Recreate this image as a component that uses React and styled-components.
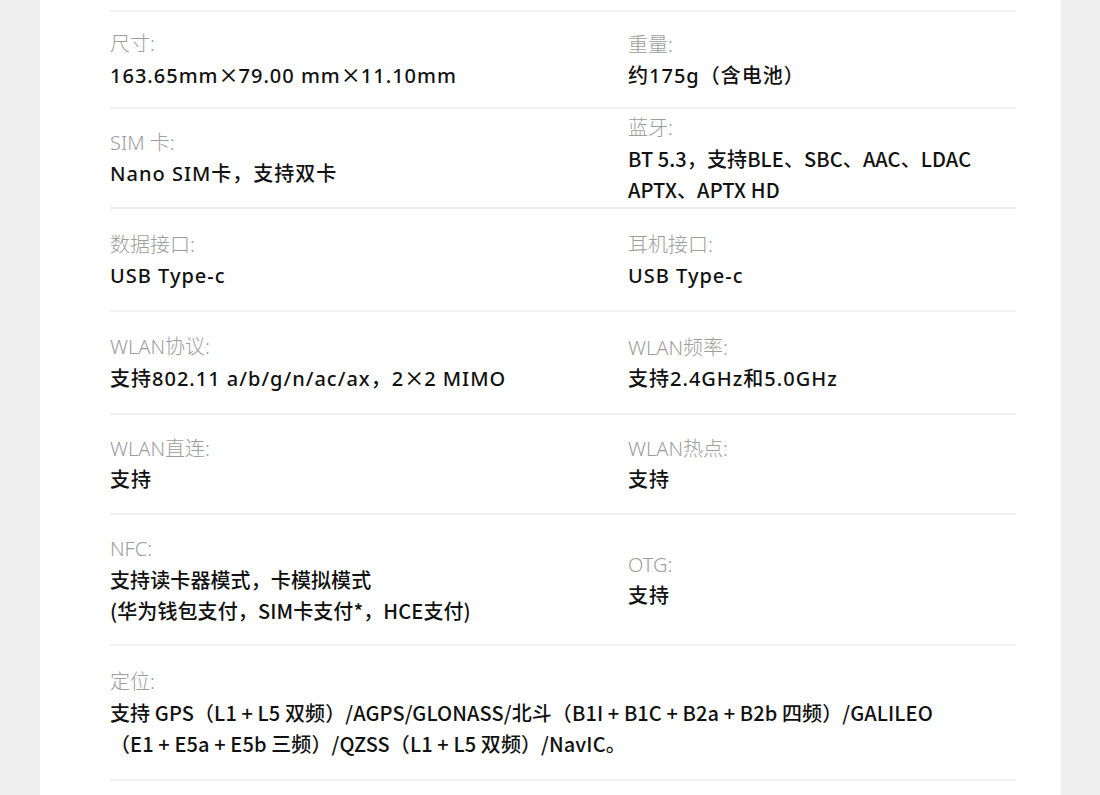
import React from 'react'
import styled, { createGlobalStyle } from 'styled-components'

const Global = createGlobalStyle`
body{
    margin: 0;
    background: #efefef;
    font-family: "Noto Sans", "Noto Sans CJK SC", sans-serif;
}
`

const specs = [
    {
        h: 95,
        cells: [
            { label: '尺寸:', lines: ['163.65mm×79.00 mm×11.10mm'] },
            { label: '重量:', lines: ['约175g（含电池）'] },
        ],
    },
    {
        h: 98,
        cells: [
            { label: 'SIM 卡:', lines: ['Nano SIM卡，支持双卡'] },
            { label: '蓝牙:', lines: ['BT 5.3，支持BLE、SBC、AAC、LDAC', 'APTX、APTX HD'], tight: true },
        ],
    },
    {
        h: 101,
        cells: [
            { label: '数据接口:', lines: ['USB Type-c'] },
            { label: '耳机接口:', lines: ['USB Type-c'] },
        ],
    },
    {
        h: 101,
        cells: [
            { label: 'WLAN协议:', lines: ['支持802.11 a/b/g/n/ac/ax，2×2 MIMO'] },
            { label: 'WLAN频率:', lines: ['支持2.4GHz和5.0GHz'] },
        ],
    },
    {
        h: 98,
        cells: [
            { label: 'WLAN直连:', lines: ['支持'] },
            { label: 'WLAN热点:', lines: ['支持'] },
        ],
    },
    {
        h: 129,
        cells: [
            { label: 'NFC:', lines: ['支持读卡器模式，卡模拟模式', '(华为钱包支付，SIM卡支付*，HCE支付)'], tight: true },
            { label: 'OTG:', lines: ['支持'] },
        ],
    },
    {
        h: 133,
        full: true,
        cells: [
            {
                label: '定位:',
                lines: [
                    '支持 GPS（L1 + L5 双频）/AGPS/GLONASS/北斗（B1I + B1C + B2a + B2b 四频）/GALILEO',
                    '（E1 + E5a + E5b 三频）/QZSS（L1 + L5 双频）/NavIC。',
                ],
                tight: true,
            },
        ],
    },
]

// the multiplication sign is drawn full width, as in the CJK font
function withTimes(text) {
    const parts = text.split('×')
    return parts.map((p, i) => (
        <React.Fragment key={i}>
            {p}
            {i < parts.length - 1 && <Times>×</Times>}
        </React.Fragment>
    ))
}

function App() {
    return (
        <>
            <Global />
            <Page>
                <Panel>
                    {specs.map((row, i) => (
                        <Row key={i} h={row.h} full={row.full}>
                            {row.cells.map((c, j) => (
                                <Cell key={j}>
                                    <Label>{c.label}</Label>
                                    {c.lines.map((l, k) => (
                                        <Value key={k} tight={c.tight}>{withTimes(l)}</Value>
                                    ))}
                                </Cell>
                            ))}
                        </Row>
                    ))}
                    <Divider />
                    <Spacer />
                </Panel>
            </Page>
        </>
    )
}

export default App

const Page = styled.div`
padding: 0 39px 0 40px;
`

const Panel = styled.div`
background: #fff;
padding: 10px 45px 0 70px;
`

const Row = styled.div`
display: grid;
grid-template-columns: ${props => props.full ? '1fr' : '518px 1fr'};
align-items: center;
min-height: ${props => props.h}px;
border-top: 2px solid #f1f1f1;
`

const Cell = styled.div`
display: flex;
flex-direction: column;
`

const Label = styled.div`
font-size: 20px;
line-height: 31px;
font-weight: 300;
color: #9d9d9d;
`

const Value = styled.div`
font-size: 20px;
line-height: 31px;
font-weight: 500;
color: #111;
white-space: nowrap;
letter-spacing: ${props => props.tight ? '0.1px' : '1px'};
font-family: ${props => props.tight ? '"Noto Sans CJK SC", sans-serif' : '"Noto Sans", "Noto Sans CJK SC", sans-serif'};
`

const Times = styled.span`
font-family: "Noto Sans CJK SC", sans-serif;
letter-spacing: 0;
`

const Divider = styled.div`
border-top: 2px solid #f1f1f1;
`

const Spacer = styled.div`
height: 40px;
`
